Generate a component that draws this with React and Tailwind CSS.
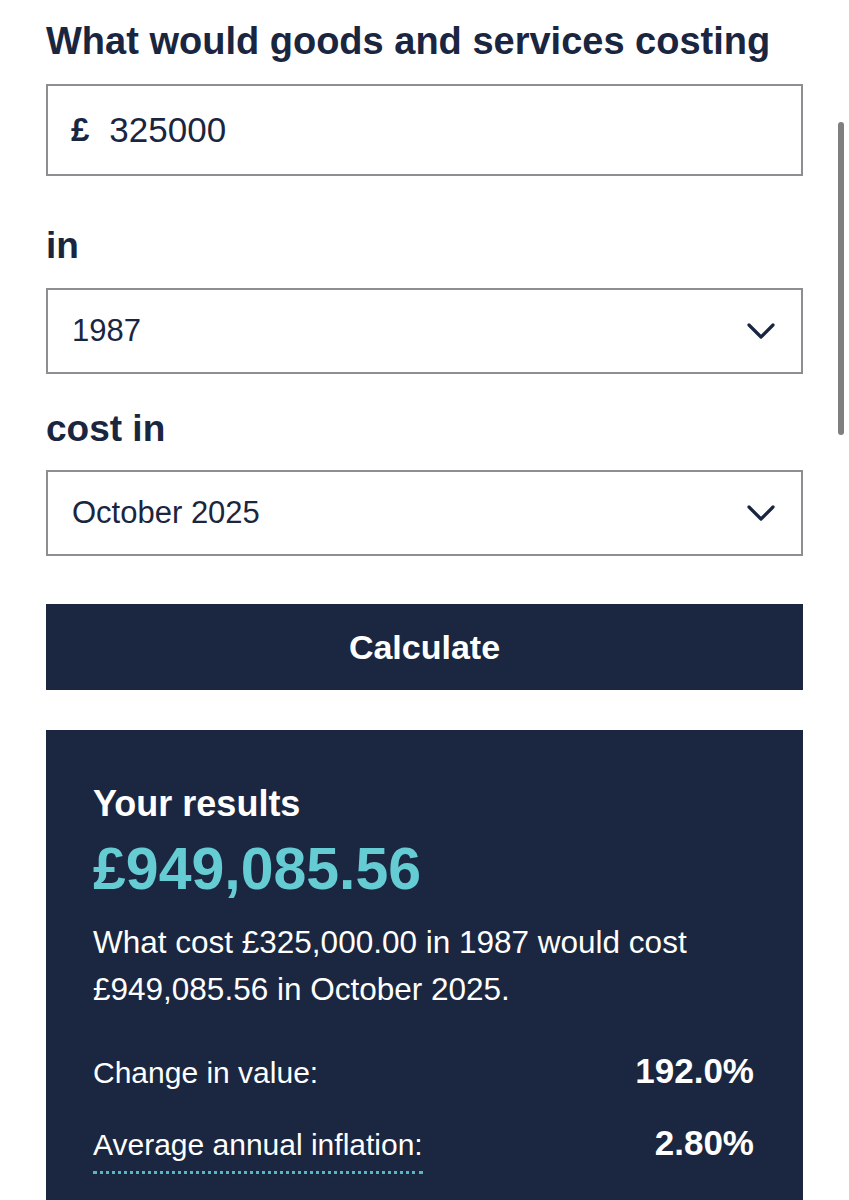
import React from "react";

const Chevron = () => (
  <svg width="28" height="18" viewBox="0 0 28 18" fill="none" className="shrink-0">
    <polyline
      points="2,3 14,15 26,3"
      stroke="#1a2640"
      strokeWidth="3.2"
      strokeLinecap="round"
      strokeLinejoin="round"
    />
  </svg>
);

const Select = ({ value }) => (
  <div className="h-[86px] border-2 border-[#8d8e91] bg-white flex items-center justify-between pl-[24px] pr-[26px]">
    <span className="text-[31px] text-[#1a2640]">{value}</span>
    <Chevron />
  </div>
);

const App = () => {
  return (
    <div
      className="relative h-[1200px] overflow-hidden bg-white px-[46px] text-[#1a2640]"
      style={{ fontFamily: '"Liberation Sans", Arial, sans-serif' }}
    >
      <h1 className="pt-[19px] text-[38px] leading-[44px] font-bold">
        What would goods and services costing
      </h1>

      <div className="mt-[21px] h-[92px] border-2 border-[#8d8e91] flex items-center pl-[23px]">
        <span className="text-[33px] font-bold">£</span>
        <span className="ml-[20px] text-[35px]">325000</span>
      </div>

      <div className="mt-[48px] text-[37px] leading-[44px] font-bold">in</div>
      <div className="mt-[20px]">
        <Select value="1987" />
      </div>

      <div className="mt-[33px] text-[37px] leading-[44px] font-bold">cost in</div>
      <div className="mt-[19px]">
        <Select value="October 2025" />
      </div>

      <button className="mt-[48px] w-full h-[86px] bg-[#1b2740] text-white text-[34px] font-bold">
        Calculate
      </button>

      <div className="mt-[40px] bg-[#1b2740] pt-[52px] pb-[60px] pl-[47px] pr-[49px] text-white">
        <h2 className="text-[36px] leading-[44px] font-bold">Your results</h2>
        <div className="mt-[10px] text-[59px] leading-[66px] font-bold text-[#66ccd4]">
          £949,085.56
        </div>
        <p className="mt-[17px] text-[31.5px] leading-[47px]">
          What cost £325,000.00 in 1987 would cost £949,085.56 in October 2025.
        </p>

        <div className="mt-[36px] flex items-baseline justify-between leading-[44px]">
          <span className="text-[30px]">Change in value:</span>
          <span className="text-[35px] font-bold">192.0%</span>
        </div>
        <div className="mt-[26px] flex items-baseline justify-between leading-[44px]">
          <span className="inline-block pb-[4px] text-[30px] border-b-[3px] border-dotted border-[#57b6c0]">
            Average annual inflation:
          </span>
          <span className="text-[35px] font-bold">2.80%</span>
        </div>
      </div>

      <div className="absolute right-[5px] top-[122px] h-[313px] w-[6px] rounded-full bg-[#7f7f7f]" />
    </div>
  );
};

export default App;
